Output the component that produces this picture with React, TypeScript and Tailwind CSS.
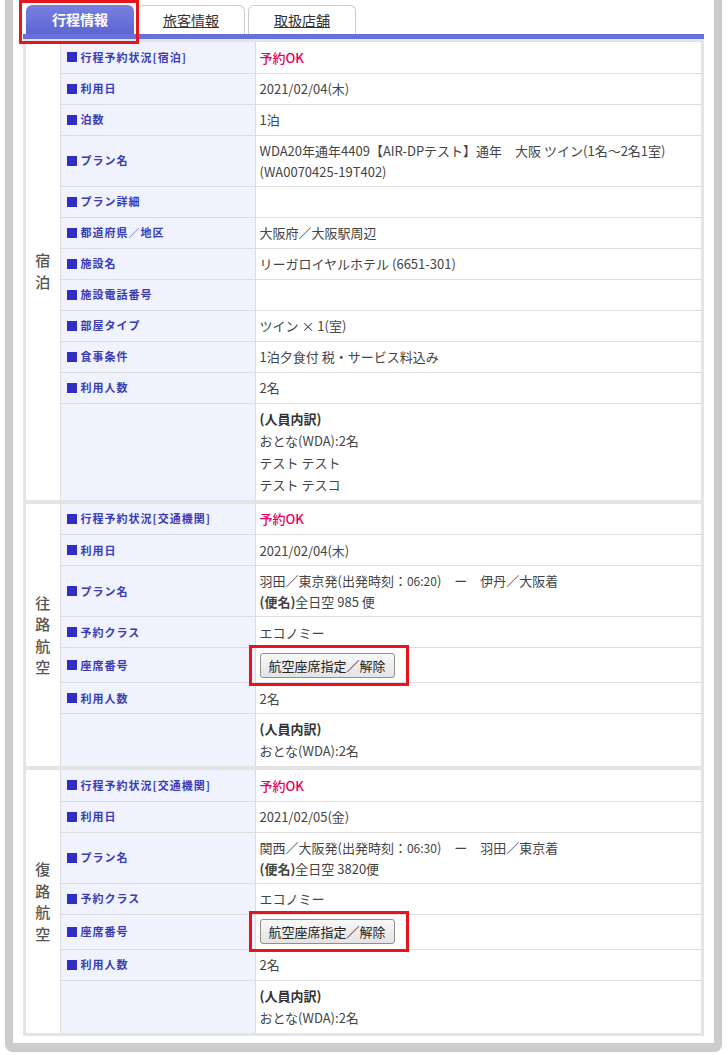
import React from 'react';

type Row = { label?: string; value: React.ReactNode; tall?: boolean };

const ok = <span className="text-[#e6005c] font-medium">予約OK</span>;

const SeatButton = () => (
  <span className="relative inline-block">
    <button className="h-[25px] px-[8px] text-[13px] text-[#222] bg-gradient-to-b from-[#f8f8f8] to-[#e4e4e4] border border-[#8f8f8f] rounded-[3px] leading-none">
      航空座席指定／解除
    </button>
    {/* annotation frame */}
    <span className="absolute -left-[11px] -top-[8px] -right-[14px] -bottom-[8px] border-[3px] border-[#e8141c] pointer-events-none"></span>
  </span>
);

const Breakdown = ({ lines }: { lines: string[] }) => (
  <div className="leading-[22px]">
    <div className="font-bold text-[#333]">(人員内訳)</div>
    {lines.map((l, i) => (
      <div key={i}>{l}</div>
    ))}
  </div>
);

const stay: Row[] = [
  { label: '行程予約状況[宿泊]', value: ok },
  { label: '利用日', value: '2021/02/04(木)' },
  { label: '泊数', value: '1泊' },
  {
    label: 'プラン名',
    value: (
      <>
        WDA20年通年4409【AIR-DPテスト】通年　大阪 ツイン(1名〜2名1室)
        <br />
        (WA0070425-19T402)
      </>
    ),
  },
  { label: 'プラン詳細', value: '' },
  { label: '都道府県／地区', value: '大阪府／大阪駅周辺' },
  { label: '施設名', value: 'リーガロイヤルホテル (6651-301)' },
  { label: '施設電話番号', value: '' },
  { label: '部屋タイプ', value: 'ツイン × 1(室)' },
  { label: '食事条件', value: '1泊夕食付 税・サービス料込み' },
  { label: '利用人数', value: '2名' },
  { value: <Breakdown lines={['おとな(WDA):2名', 'テスト テスト', 'テスト テスコ']} /> },
];

const flight = (date: string, route: string, time: string, dest: string, flightNo: string): Row[] => [
  { label: '行程予約状況[交通機関]', value: ok },
  { label: '利用日', value: date },
  {
    label: 'プラン名',
    value: (
      <>
        {route}(出発時刻：<span className="text-[12px]">{time}</span>)　ー　{dest}
        <br />
        <span className="font-bold">(便名)</span>
        {flightNo}
      </>
    ),
  },
  { label: '予約クラス', value: 'エコノミー' },
  { label: '座席番号', value: <SeatButton />, tall: true },
  { label: '利用人数', value: '2名' },
  { value: <Breakdown lines={['おとな(WDA):2名']} /> },
];

const Section = ({ title, rows }: { title: string[]; rows: Row[] }) => (
  <table className="w-full border-collapse bg-white table-fixed">
    <colgroup>
      <col className="w-[34px]" />
      <col className="w-[195px]" />
      <col />
    </colgroup>
    <tbody>
      {rows.map((r, i) => (
        <tr key={i}>
          {i === 0 && (
            <td rowSpan={rows.length} className="border-r border-[#dddddd] align-middle text-center">
              <div className="text-[15px] leading-[21.5px] text-[#555] font-medium">
                {title.map((c) => (
                  <div key={c}>{c}</div>
                ))}
              </div>
            </td>
          )}
          <td
            className={`bg-[#f0f3fd] border-r border-[#dddddd] px-[6px] align-middle ${
              i > 0 ? 'border-t' : ''
            }`}
          >
            {r.label && (
              <div className="flex items-center text-[11px] font-bold text-[#3b3bb6] tracking-[1px] leading-none">
                <span className="inline-block w-[10px] h-[10px] bg-[#2e2ec4] mr-[4px]"></span>
                {r.label}
              </div>
            )}
          </td>
          <td
            className={`px-[4px] text-[13px] leading-[21px] text-[#444] align-middle ${
              r.tall ? 'h-[35px]' : 'h-[31px]'
            } ${i > 0 ? 'border-t border-[#dddddd]' : ''} py-[4px]`}
          >
            {r.value}
          </td>
        </tr>
      ))}
    </tbody>
  </table>
);

export default function App() {
  return (
    <div className="w-[728px] h-[1055px] bg-white font-['Noto_Sans_CJK_JP','Noto_Sans',sans-serif] overflow-hidden">
      <div className="ml-[5px] w-[717px] h-[1052px] border-x-8 border-b-[9px] border-[#cccccc] rounded-b-[8px] bg-white px-[10px] pt-[5px]">
        {/* tabs */}
        <div className="flex items-end gap-[3px] pl-[3px] h-[29px]">
          <div className="relative w-[108px] h-[29px]">
            <div className="h-full rounded-t-[6px] bg-gradient-to-b from-[#7880df] to-[#5c66d2] flex items-center justify-center text-white text-[14px] font-bold">
              行程情報
            </div>
            <span className="absolute -left-[7px] -top-[5px] -right-[5px] -bottom-[10px] border-[3px] border-[#e8141c] z-10"></span>
          </div>
          <div className="w-[108px] h-[29px] rounded-t-[6px] border border-b-0 border-[#cccccc] bg-white flex items-center justify-center text-[14px] text-[#333] underline">
            旅客情報
          </div>
          <div className="w-[108px] h-[29px] rounded-t-[6px] border border-b-0 border-[#cccccc] bg-white flex items-center justify-center text-[14px] text-[#333] underline">
            取扱店舗
          </div>
        </div>
        <div className="h-[5px] bg-[#6670d8]"></div>
        <div className="bg-[#e4e4e4] p-[3px] flex flex-col gap-[4px]">
          <Section title={['宿', '泊']} rows={stay} />
          <Section
            title={['往', '路', '航', '空']}
            rows={flight('2021/02/04(木)', '羽田／東京発', '06:20', '伊丹／大阪着', '全日空 985 便')}
          />
          <Section
            title={['復', '路', '航', '空']}
            rows={flight('2021/02/05(金)', '関西／大阪発', '06:30', '羽田／東京着', '全日空 3820便')}
          />
        </div>
      </div>
    </div>
  );
}
